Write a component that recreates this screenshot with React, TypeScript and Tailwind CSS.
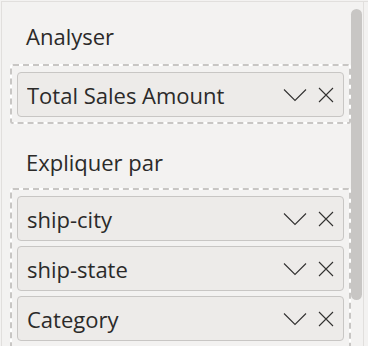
import { ReactNode } from "react";

const fieldsAnalyse = ["Total Sales Amount"];
const fieldsExplain = ["ship-city", "ship-state", "Category"];

const ChevronIcon = () => (
  <svg width="24" height="14" viewBox="0 0 24 14" fill="none" className="shrink-0">
    <path d="M1 1.5 L12 12.5 L23 1.5" stroke="#323130" strokeWidth="1.1" />
  </svg>
);

const CloseIcon = () => (
  <svg width="16" height="16" viewBox="0 0 16 16" fill="none" className="shrink-0">
    <path d="M1 1 L15 15 M15 1 L1 15" stroke="#323130" strokeWidth="1.1" />
  </svg>
);

const FieldPill = ({ label }: { label: string }) => (
  <div className="flex items-center h-[45px] pl-[9px] pr-[9px] bg-[#edebe9] border border-[#c8c6c4] rounded-[4px]">
    <span className="flex-1 truncate pt-px text-[22px] leading-[30px] text-[#2b2a29]">
      {label}
    </span>
    <div className="flex items-center gap-[11px]">
      <ChevronIcon />
      <CloseIcon />
    </div>
  </div>
);

// dashed drop zone: white shows through the dash gaps
const DropZone = ({ children }: { children: ReactNode }) => (
  <div className="ml-[8px] w-[341px] bg-white border-2 border-dashed border-[#c8c6c4] rounded-[3px]">
    <div className="flex flex-col gap-[5px] bg-[#f3f2f1] px-[5px] pt-[6px] pb-[5px]">
      {children}
    </div>
  </div>
);

export default function App() {
  return (
    <div
      className="w-[368px] h-[346px] overflow-hidden bg-[#f3f2f1] pt-px pl-px"
      style={{ fontFamily: '"Open Sans", "Noto Sans", sans-serif' }}
    >
      <div className="flex h-full border-t border-l border-[#e1dfdd]">
        {/* Field wells */}
        <div className="w-[349px] shrink-0">
          <div className="ml-[24px] mt-[19px] mb-[13px] text-[22px] leading-[30px] text-[#2b2a29]">
            Analyser
          </div>
          <DropZone>
            {fieldsAnalyse.map((f) => (
              <FieldPill key={f} label={f} />
            ))}
          </DropZone>

          <div className="ml-[24px] mt-[23px] mb-[11px] text-[22px] leading-[30px] text-[#2b2a29]">
            Expliquer par
          </div>
          <DropZone>
            {fieldsExplain.map((f) => (
              <FieldPill key={f} label={f} />
            ))}
          </DropZone>
        </div>

        {/* Scrollbar */}
        <div className="w-[12px] shrink-0 pt-[7px]">
          <div className="w-[11px] h-[291px] rounded-full bg-[#c8c6c4]" />
        </div>
        <div className="flex-1 border-l border-[#e1dfdd]" />
      </div>
    </div>
  );
}
